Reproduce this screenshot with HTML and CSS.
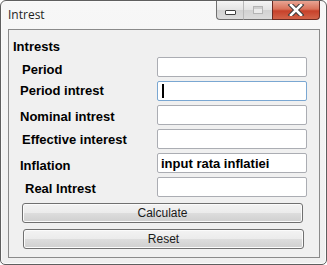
FILE: index.html
```html
<!DOCTYPE html>
<html lang="en">
<head>
    <meta charset="UTF-8">
    <title>Intrest</title>
    <link rel="stylesheet" href="styles.css">
</head>
<body>

    <div class="window">
        <div class="titlebar">
            <span class="title">Intrest</span>
            <div class="caption">
                <div class="cap-btn cap-min"><span class="min-bar"></span></div>
                <div class="cap-btn cap-max"><span class="max-box"></span></div>
                <div class="cap-btn cap-close">
                    <svg width="18" height="12" viewBox="0 0 18 12">
                        <path d="M4 1 L14 11 M14 1 L4 11" stroke="#3a3a3a" stroke-width="4.6" stroke-linecap="square"/>
                        <path d="M4 1 L14 11 M14 1 L4 11" stroke="#fff" stroke-width="2.6" stroke-linecap="square"/>
                    </svg>
                </div>
            </div>
        </div>

        <div class="client">
            <h1>Intrests</h1>

            <div class="form">
                <label class="lbl lbl-a lbl-low">Period</label>
                <input type="text" class="field">

                <label class="lbl lbl-top">Period intrest</label>
                <div class="field field-focus"><span class="caret"></span></div>

                <label class="lbl lbl-mid">Nominal intrest</label>
                <input type="text" class="field">

                <label class="lbl lbl-a">Effective interest</label>
                <input type="text" class="field">

                <label class="lbl lbl-low">Inflation</label>
                <input type="text" class="field" value="input rata inflatiei">

                <label class="lbl lbl-b lbl-mid">Real Intrest</label>
                <input type="text" class="field">
            </div>

            <button class="button">Calculate</button>
            <button class="button button-reset">Reset</button>
        </div>
    </div>

</body>
</html>
```

FILE: styles.css
```css
* {
    margin: 0;
    padding: 0;
    box-sizing: border-box;
}

body {
    font-family: "Liberation Sans", Arial, sans-serif;
    background-color: #fff;
}

.window {
    width: 327px;
    height: 265px;
    border: 1px solid #5f5f5f;
    border-radius: 6px 6px 5px 5px;
    background: linear-gradient(#f7f7f7, #efefef);
    box-shadow: inset 0 0 0 1px #fbfbfb;
    padding: 0 6px 6px 7px;
    display: flex;
    flex-direction: column;
}

/* Pasek tytułu */
.titlebar {
    height: 28px;
    display: flex;
    align-items: flex-start;
    justify-content: space-between;
}

.title {
    font-family: "Open Sans", "Liberation Sans", sans-serif;
    font-size: 12px;
    color: #1e1e1e;
    margin-top: 5px;
}

.caption {
    display: flex;
    height: 19px;
}

.cap-btn {
    height: 19px;
    display: flex;
    align-items: center;
    justify-content: center;
    border: 1px solid #707070;
    border-top: none;
}

.cap-min {
    width: 27px;
    border-radius: 0 0 0 4px;
    border-right: none;
    background: linear-gradient(#f4f4f4, #e3e3e3 50%, #d2d2d2 51%, #dcdcdc);
}

.cap-max {
    width: 29px;
    border-left: 1px solid #b9b9b9;
    border-right: none;
    background: linear-gradient(#f4f4f4, #e3e3e3 50%, #d2d2d2 51%, #dcdcdc);
}

.cap-close {
    width: 48px;
    border-radius: 0 0 4px 0;
    border-color: #6b2b22;
    background: linear-gradient(#e8a493, #d9725a 45%, #c7412a 55%, #d2644a);
}

.min-bar {
    display: block;
    width: 11px;
    height: 5px;
    margin-top: 4px;
    background: #fff;
    border: 1px solid #404040;
    border-radius: 1px;
}

.max-box {
    display: block;
    width: 10px;
    height: 8px;
    border: 1px solid #b4b4b4;
    box-shadow: inset 0 2px 0 #cfcfcf;
    background: #ebebeb;
}

/* Obszar roboczy */
.client {
    flex: 1;
    border: 1px solid #8a8a8a;
    background-color: #f0f0f0;
    padding: 9px 0 0 0;
}

h1 {
    font-size: 13px;
    font-weight: bold;
    color: #000;
    margin-left: 4px;
    line-height: 15px;
}

.form {
    display: grid;
    grid-template-columns: 148px 150px;
    grid-auto-rows: 20px;
    row-gap: 4px;
    margin-top: 3px;
}

.lbl {
    height: 20px;
    font-size: 13px;
    font-weight: bold;
    color: #000;
    line-height: 20px;
    padding-left: 11px;
    padding-top: 1px;
    white-space: nowrap;
}

.lbl-low {
    padding-top: 3px;
}

.lbl-mid {
    padding-top: 2px;
}

.lbl-top {
    padding-top: 0;
}

.lbl-a {
    padding-left: 13px;
}

.lbl-b {
    padding-left: 16px;
}

.field {
    width: 150px;
    height: 20px;
    border: 1px solid #abadb3;
    border-radius: 2px;
    background-color: #fff;
    font-family: "Liberation Sans", Arial, sans-serif;
    font-size: 13px;
    font-weight: bold;
    color: #000;
    padding: 0 3px;
    outline: none;
}

.field-focus {
    border-color: #7aa7d2;
    display: flex;
    align-items: center;
}

.caret {
    display: block;
    width: 2px;
    height: 14px;
    background: #000;
    margin-left: 1px;
}

.button {
    display: block;
    width: 281px;
    height: 20px;
    margin: 6px 0 0 13px;
    border: 1px solid #707070;
    border-radius: 3px;
    background: linear-gradient(#f3f3f3, #ebebeb 50%, #dddddd 51%, #cfcfcf);
    box-shadow: inset 0 0 0 1px #fbfbfb;
    font-family: "Liberation Sans", Arial, sans-serif;
    font-size: 12px;
    color: #1a1a1a;
    line-height: 17px;
}

.button-reset {
    margin-left: 14px;
}
```
